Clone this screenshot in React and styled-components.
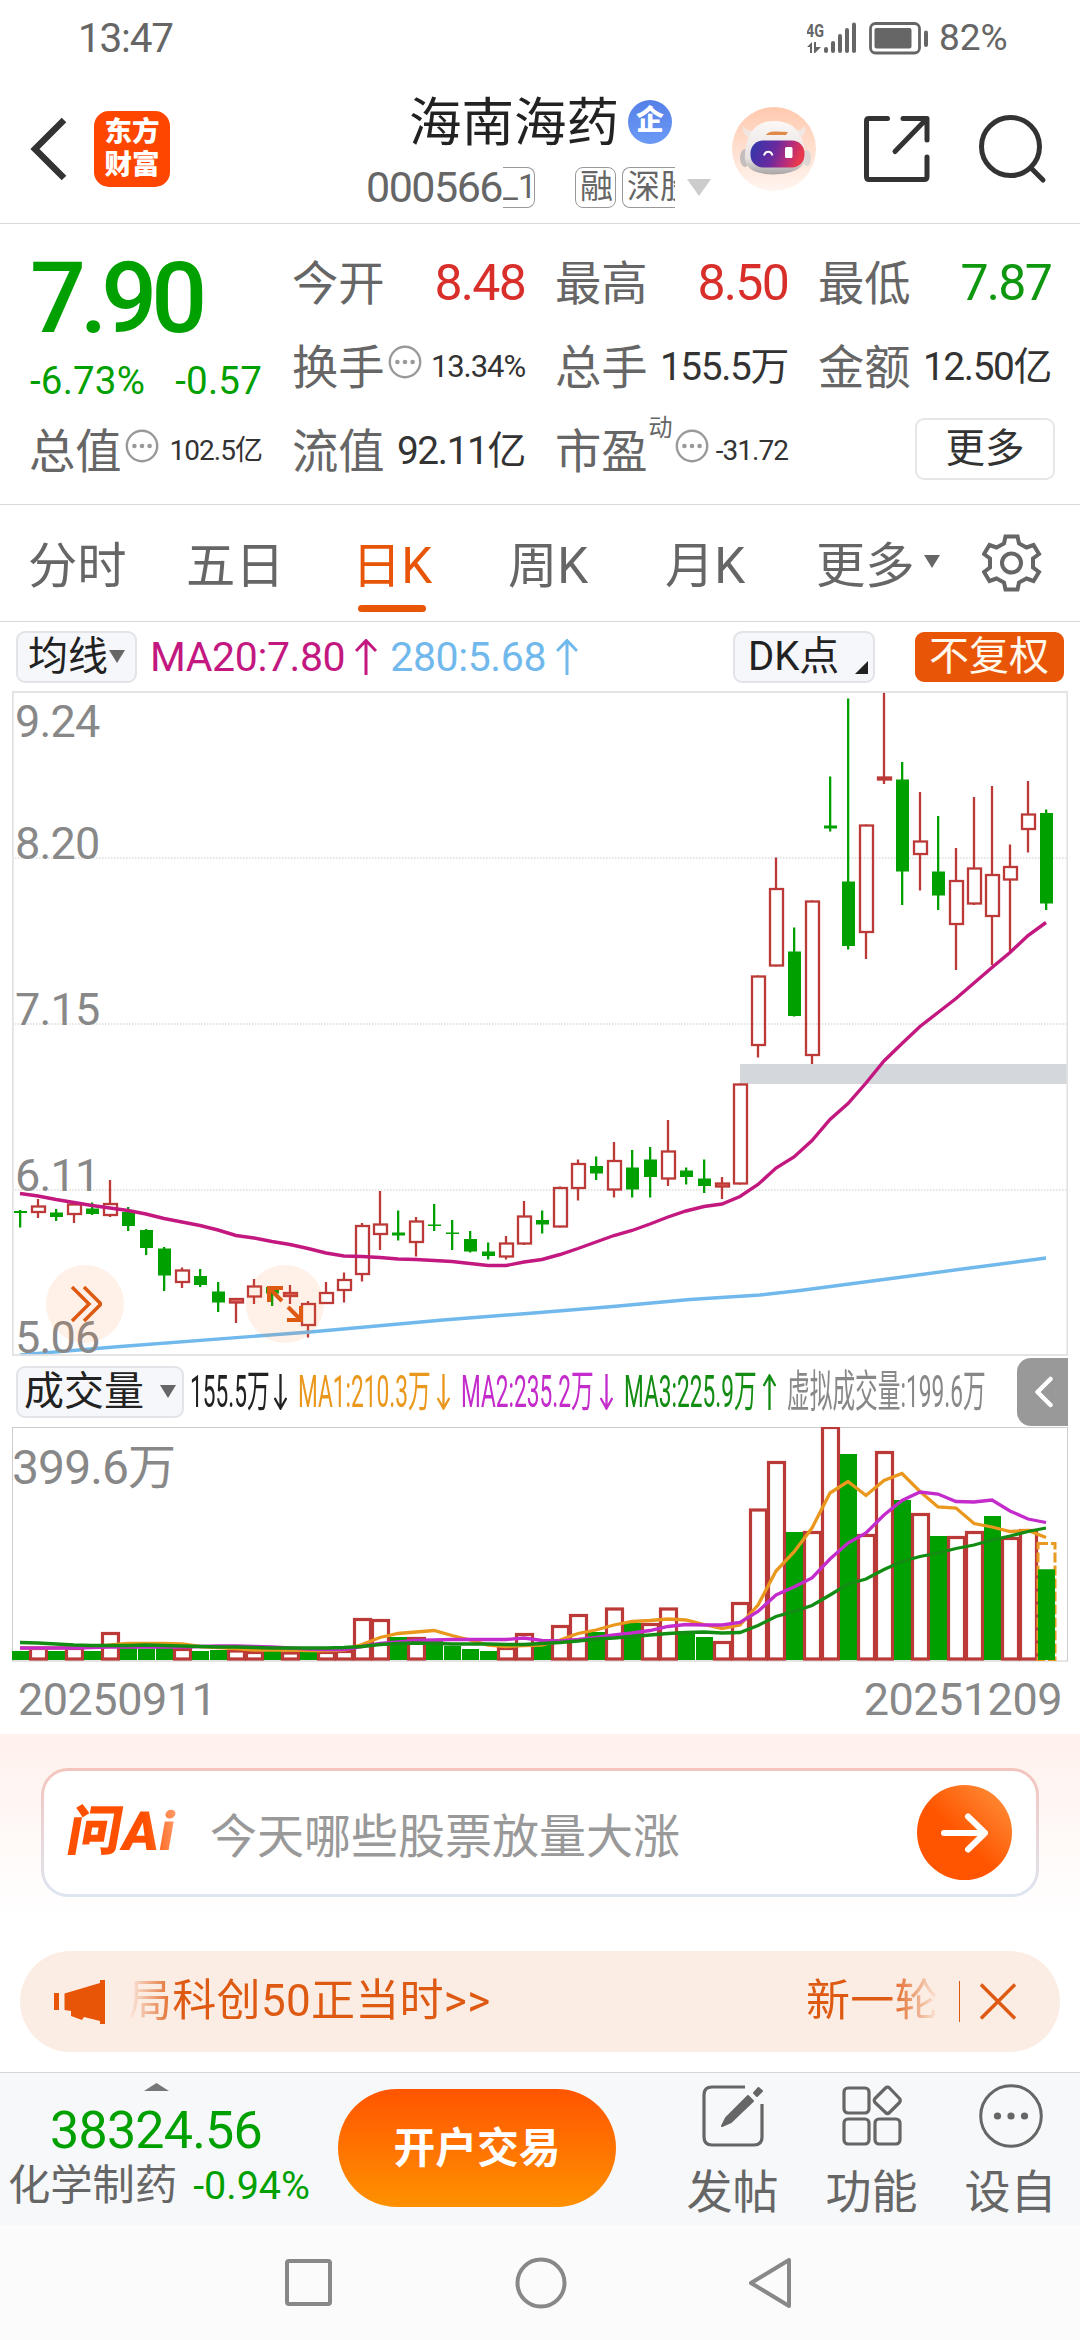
import React from 'react'
import styled, { createGlobalStyle } from 'styled-components'

const GlobalStyle = createGlobalStyle`
    * {
        box-sizing: border-box;
    }
    body {
        margin: 0;
        background: #fff;
        color: #333;
        font-family: Roboto, 'Noto Sans CJK SC', sans-serif;
    }
    svg {
        display: block;
        flex: none;
    }
`

const UP = '#bb3a38'
const DOWN = '#00a000'
const ORANGE = '#e85507'

const Screen = styled.div`
    width: 1080px;
    height: 2340px;
    display: flex;
    flex-direction: column;
    overflow: hidden;
    white-space: nowrap;
`

/* status bar */

const StatusBar = styled.div`
    height: 75px;
    padding: 0 72px 0 78px;
    display: flex;
    align-items: center;
    color: #666;
    line-height: 76px;
`

const Clock = styled.span`
    flex: 1;
    font-size: 40.5px;
    letter-spacing: -1.2px;
`

const Battery = styled.span`
    width: 69px;
    margin-left: 10px;
    font-size: 37px;
`

/* header */

const HeaderBar = styled.header`
    height: 149px;
    display: flex;
    align-items: center;
    padding: 0 33px 0 30px;
    border-bottom: 1px solid #d9d9d9;
`

const Logo = styled.div`
    width: 76px;
    height: 76px;
    margin-left: 26px;
    padding-top: 4px;
    border-radius: 15px;
    background: #ff4600;
    color: #fff;
    font-size: 27.5px;
    font-weight: 900;
    line-height: 33px;
    text-align: center;
`

const Titles = styled.div`
    flex: 1;
    height: 148px;
    padding: 10px 0 0 196px;
`

const NameLine = styled.div`
    display: flex;
    align-items: center;
    height: 66px;
    padding-left: 43px;
    font-size: 52.5px;
    color: #222;
`

const Badge = styled.span`
    width: 44px;
    height: 44px;
    margin: 8px 0 0 9px;
    border-radius: 50%;
    background: linear-gradient(#5580e8, #6b9af5);
    color: #fff;
    font-size: 28px;
    font-weight: 900;
    line-height: 42px;
    text-align: center;
`

const CodeLine = styled.div`
    display: flex;
    align-items: center;
    height: 42px;
    margin-top: 15px;
    color: #666;
`

const Code = styled.span`
    width: 137px;
    font-size: 43px;
    letter-spacing: -1.5px;
`

const Tag = styled.span`
    width: ${({ $width }) => $width}px;
    height: 41px;
    margin-right: ${({ $gap }) => $gap}px;
    border: 1px solid #999;
    border-left-width: ${({ $cut }) => ($cut === 'left' ? 0 : 1)}px;
    border-right-width: ${({ $cut }) => ($cut === 'right' ? 0 : 1)}px;
    border-radius: ${({ $cut }) =>
        $cut === 'left' ? '0 8px 8px 0' : $cut === 'right' ? '8px 0 0 8px' : '8px'};
    padding-left: ${({ $cut }) => ($cut === 'left' ? 0 : 4)}px;
    overflow: hidden;
    font-size: 33px;
    line-height: 38px;
`

const Triangle = styled.i`
    display: inline-block;
    flex: none;
    border-style: solid;
    border-color: transparent;
    border-top-color: ${({ $color }) => $color || '#666'};
    border-width: ${({ $h }) => $h || 13}px ${({ $w }) => $w || 8.5}px 0;
`

const HeaderIcons = styled.div`
    display: flex;
    align-items: center;
`

const ShareIcon = styled.svg`
    margin: 0 49px 0 47px;
`

/* quote panel */

const Quote = styled.section`
    height: 281px;
    padding: 15px 30px 0;
    display: grid;
    grid-template-columns: repeat(4, 232px);
    grid-template-rows: repeat(3, 84px);
    column-gap: 31px;
    border-bottom: 1px solid #d9d9d9;
`

const PriceCell = styled.div`
    grid-row: span 2;
    color: ${DOWN};
`

const Price = styled.div`
    height: 115px;
    line-height: 119px;
    font-size: 98.5px;
    font-weight: 500;
    letter-spacing: -6px;
`

const Change = styled.div`
    display: flex;
    justify-content: space-between;
    line-height: 53px;
    font-size: 38.5px;
    letter-spacing: 0.2px;
`

const Cell = styled.div`
    display: flex;
    align-items: center;
    height: 84px;
    line-height: 84px;
`

const Label = styled.span`
    margin-left: -1px;
    padding-top: 5px;
    font-size: 46.3px;
    color: #666;
`

const Value = styled.span`
    margin-left: auto;
    padding-top: 3px;
    font-size: ${({ $size }) => $size}px;
    letter-spacing: -0.035em;
    color: ${({ $color }) => $color || '#333'};
`

const DotsSvg = styled.svg`
    margin: 0 0 6px 3px;
`

const Sup = styled.sup`
    align-self: flex-start;
    margin: 0 -1px 0 1px;
    line-height: 42px;
    font-size: 24px;
    color: #666;
`

const MoreCell = styled(Cell)`
    justify-content: flex-end;
    margin-right: -4px;
`

const MoreButton = styled.button`
    width: 140px;
    height: 62px;
    padding: 0;
    border: 2px solid #e6e6e6;
    border-radius: 9px;
    background: #fff;
    color: #333;
    font: 39.5px/56px Roboto, 'Noto Sans CJK SC', sans-serif;
`

/* period tabs */

const Tabs = styled.nav`
    height: 117px;
    padding-left: 28px;
    display: grid;
    grid-template-columns: 158px 166px 156px 157px 151px 166px 60px;
    align-items: center;
    border-bottom: 1px solid #d9d9d9;
`

const Tab = styled.a`
    display: flex;
    align-items: center;
    gap: 9px;
    height: 116px;
    padding-bottom: 3px;
    font-size: 49.3px;
    color: ${({ $active }) => ($active ? ORANGE : '#666')};
    position: relative;

    &::after {
        content: '';
        display: ${({ $active }) => ($active ? 'block' : 'none')};
        position: absolute;
        left: 6px;
        bottom: 9px;
        width: 68px;
        height: 7px;
        border-radius: 4px;
        background: ${ORANGE};
    }
`

/* indicator rows */

const MaRow = styled.div`
    height: 69px;
    padding: 0 16px;
    display: flex;
    align-items: center;
    line-height: 68px;
`

const Chip = styled.span`
    width: ${({ $width }) => $width}px;
    height: ${({ $height }) => $height || 52}px;
    margin-left: ${({ $left }) => $left || 0}px;
    padding: 0 ${({ $pad }) => $pad || 10}px;
    display: flex;
    align-items: center;
    justify-content: space-between;
    border: 2px solid ${({ $solid }) => ($solid ? ORANGE : '#e2e4e8')};
    border-radius: 9px;
    background: ${({ $solid }) => ($solid ? ORANGE : '#f6f7fa')};
    color: ${({ $solid }) => ($solid ? '#fff8ec' : '#222')};
    font-size: 40px;
    line-height: 46px;
`

const MaText = styled.span`
    display: flex;
    align-items: center;
    gap: 10px;
    margin-left: ${({ $left }) => $left}px;
    font-size: 41px;
    letter-spacing: -0.4px;
    color: ${({ $color }) => $color};
`

const Corner = styled.i`
    align-self: flex-end;
    margin: 0 -8px 7px 0;
    border-left: 13px solid transparent;
    border-bottom: 13px solid #222;
`

const Spacer = styled.span`
    flex: 1;
`

const ChartBox = styled.div`
    position: relative;
    margin: 0 12px;
    height: ${({ $height }) => $height}px;
`

const RoundButton = styled.button`
    position: absolute;
    left: ${({ $left }) => $left}px;
    bottom: 13px;
    width: 78px;
    height: 78px;
    padding: 0;
    display: flex;
    align-items: center;
    justify-content: center;
    border: 0;
    border-radius: 50%;
    background: rgba(255, 120, 50, 0.11);
`

const VolRow = styled.div`
    height: 71px;
    padding: 0 12px 0 16px;
    display: flex;
    align-items: center;
    line-height: 68px;
`

const VolValues = styled.div`
    flex: 1;
    display: flex;
    padding-left: 6px;
`

const Narrow = styled.span`
    display: flex;
    align-items: center;
    width: ${({ $width }) => $width}px;
    color: ${({ $color }) => $color};

    span {
        flex: none;
        width: ${({ $text }) => $text}px;
        font-size: 44.5px;
        transform: scaleX(0.51);
        transform-origin: left;
    }
`

const Collapse = styled.button`
    width: 51px;
    height: 68px;
    padding: 0 0 0 17px;
    border: 0;
    border-radius: 14px 0 0 14px;
    background: #999;
`

const Dates = styled.div`
    height: 72px;
    padding: 0 18px 0 18px;
    display: flex;
    justify-content: space-between;
    line-height: 76px;
    font-size: 45px;
    letter-spacing: -0.5px;
    color: #888;
`

/* ask bar and notice */

const Ask = styled.section`
    height: 217px;
    padding: 34px 41px 0;
    background: linear-gradient(#fff1ec, #fff 84%);
`

const AskField = styled.div`
    height: 129px;
    padding: 0 24px;
    display: flex;
    align-items: center;
    border: 3px solid transparent;
    border-radius: 27px;
    background: linear-gradient(#fff, #fff) padding-box, linear-gradient(#f4c4bd, #dde6f1) border-box;
`

const AskLogo = styled.span`
    width: 142px;
    height: 66px;
    line-height: 64px;
    font-size: 54px;
    font-weight: 900;
    letter-spacing: 0.5px;
    color: transparent;
    background: linear-gradient(75deg, #ff5000 55%, #ffb48a 80%);
    background-clip: text;
    transform: skewX(-10deg);
`

const AskHint = styled.span`
    flex: 1;
    font-size: 47px;
    color: #999;
`

const AskGo = styled.button`
    width: 95px;
    height: 95px;
    padding: 0 0 0 24px;
    border: 0;
    border-radius: 50%;
    background: linear-gradient(45deg, #ff5500 45%, #ff9640);
`

const Notice = styled.div`
    height: 101px;
    margin: 0 20px 20px;
    padding: 0 43px 0 34px;
    display: flex;
    align-items: center;
    border-radius: 51px;
    background: #fcede4;
    color: #de5a12;
    font-size: 44px;
    line-height: 101px;
`

const Marquee = styled.div`
    width: 812px;
    margin-left: 23px;
    display: flex;
    justify-content: space-between;
    letter-spacing: 0.3px;
    mask-image: linear-gradient(90deg, transparent, #000 50px, #000 760px, transparent);

    span:last-child {
        width: 134px;
        overflow: hidden;
    }
`

const Divider = styled.i`
    width: 1px;
    height: 41px;
    margin: 0 20px 0 19px;
    background: #de5a12;
`

/* bottom bars */

const Footer = styled.footer`
    height: 153px;
    display: flex;
    border-top: 1px solid #d5d8da;
    background: #f7f8fa;
`

const Index = styled.div`
    flex: none;
    width: 312px;
    display: flex;
    flex-direction: column;
    align-items: center;
    padding-top: 10px;
    color: ${DOWN};
`

const IndexValue = styled.div`
    height: 78px;
    line-height: 80px;
    font-size: 52px;
    letter-spacing: -0.8px;
`

const IndexName = styled.div`
    align-self: stretch;
    display: flex;
    justify-content: space-between;
    padding: 0 2px 0 8px;
    line-height: 34px;
    font-size: 39.5px;

    span:first-child {
        font-size: 42.3px;
        color: #666;
    }
`

const Trade = styled.button`
    flex: none;
    width: 278px;
    height: 118px;
    margin: 16px 47px 0 26px;
    padding: 0;
    border: 0;
    border-radius: 59px;
    background: linear-gradient(#ff5500, #ff9100);
    color: #fff;
    font: 700 41.8px/120px Roboto, 'Noto Sans CJK SC', sans-serif;
`

const Tool = styled.div`
    flex: none;
    width: 139px;
    display: flex;
    flex-direction: column;
    align-items: center;
    padding-top: 11px;
    font-size: 46px;
    line-height: 88px;
    color: #666;
`

const NavBar = styled.div`
    flex: 1;
    display: flex;
    align-items: center;
    justify-content: center;
    gap: 182px;
    background: #fbfbfb;
`

const DotsIcon = () => (
    <DotsSvg width="34" height="34" viewBox="0 0 34 34">
        <circle cx="17" cy="17" r="15.2" fill="none" stroke="#999" strokeWidth="2.4" />
        <circle cx="9.4" cy="17" r="2.3" fill="#999" />
        <circle cx="17" cy="17" r="2.3" fill="#999" />
        <circle cx="24.6" cy="17" r="2.3" fill="#999" />
    </DotsSvg>
)

const Arrow = ({ down, narrow }) => (
    <svg width={narrow ? 13 : 22} height="36" viewBox="0 0 22 36" preserveAspectRatio="none" fill="none" stroke="currentColor">
        <path
            d={down ? 'M11 0V34M1 24L11 34.5L21 24' : 'M11 36V2M1 12L11 1.5L21 12'}
            vectorEffect="non-scaling-stroke"
            strokeWidth={narrow ? 2.3 : 3}
        />
    </svg>
)

const Robot = () => (
    <svg width="84" height="84" viewBox="0 0 84 84">
        <defs>
            <linearGradient id="halo" x1="0" y1="0" x2="0" y2="1">
                <stop offset="0" stopColor="#ffc9ae" />
                <stop offset="1" stopColor="#fff5f0" />
            </linearGradient>
            <linearGradient id="shell" x1="0" y1="0" x2="0" y2="1">
                <stop offset="0" stopColor="#fbf8f6" />
                <stop offset="0.7" stopColor="#e6e2e2" />
                <stop offset="1" stopColor="#aaa5a5" />
            </linearGradient>
            <linearGradient id="visor" x1="0" y1="0" x2="1" y2="0.2">
                <stop offset="0" stopColor="#2c38ac" />
                <stop offset="0.5" stopColor="#6a2a9e" />
                <stop offset="0.75" stopColor="#b02c80" />
                <stop offset="1" stopColor="#e8384e" />
            </linearGradient>
        </defs>
        <circle cx="42" cy="42" r="42" fill="url(#halo)" />
        <path d="M11 19Q10 29 20 32L24 24Q14 25 11 19ZM73 19Q75 28 66 32L62 23Q70 24 73 19Z" fill="#f1e6e1" />
        <ellipse cx="13" cy="51" rx="5" ry="9" fill="#c3bdbd" />
        <ellipse cx="75" cy="51" rx="4" ry="8" fill="#dcd6d5" />
        <path d="M42 14C58 14 68 22 71 36C75 50 74 57 66 62C55 69 30 69 20 63C11 57 12 48 15 36C18 22 27 14 42 14Z" fill="url(#shell)" />
        <path d="M34 28Q36 24 44 24.5L56 25L54 28Z" fill="#e08a4a" />
        <rect x="18.5" y="33.5" width="54" height="27" rx="12.5" fill="url(#visor)" />
        <path d="M32 48.5C33.5 43.5 39 43.5 40.5 48.5" fill="none" stroke="#fff" strokeWidth="2" />
        <rect x="53" y="40" width="7.5" height="11" rx="1.5" fill="#fff" />
    </svg>
)

const Header = () => (
    <HeaderBar>
        <svg width="38" height="66" viewBox="0 0 38 66" fill="none" stroke="#333" strokeWidth="6.5">
            <path d="M34 4L5 33L34 62" />
        </svg>
        <Logo>
            东方
            <br />
            财富
        </Logo>
        <Titles>
            <NameLine>
                海南海药<Badge>企</Badge>
            </NameLine>
            <CodeLine>
                <Code>000566</Code>
                <Tag $width={32} $gap={40} $cut="left">_1</Tag>
                <Tag $width={41} $gap={6}>融</Tag>
                <Tag $width={53} $gap={12} $cut="right">深股</Tag>
                <Triangle $color="#ccc" $w={12} $h={17} />
            </CodeLine>
        </Titles>
        <HeaderIcons>
            <Robot />
            <ShareIcon width="67" height="68" viewBox="0 0 67 68" fill="none" stroke="#333" strokeWidth="5" strokeLinecap="round" strokeLinejoin="round">
                <path d="M24.5 3.5H6Q3.5 3.5 3.5 6V61.5Q3.5 64.5 6 64.5H61Q64 64.5 64 61.5V42M40 3.5H64V25M62 5.5L32 36.5" />
            </ShareIcon>
            <svg width="68" height="70" viewBox="0 0 68 70" fill="none" stroke="#333" strokeWidth="5" strokeLinecap="round">
                <circle cx="31.5" cy="32.5" r="29" />
                <path d="M52 54L64 66" />
            </svg>
        </HeaderIcons>
    </HeaderBar>
)

const QuotePanel = () => (
    <Quote>
        <PriceCell>
            <Price>7.90</Price>
            <Change>
                <span>-6.73%</span>
                <span>-0.57</span>
            </Change>
        </PriceCell>
        <Cell>
            <Label>今开</Label>
            <Value $size={50} $color="#d92f2b">8.48</Value>
        </Cell>
        <Cell>
            <Label>最高</Label>
            <Value $size={50} $color="#d92f2b">8.50</Value>
        </Cell>
        <Cell>
            <Label>最低</Label>
            <Value $size={50} $color="#0f980f">7.87</Value>
        </Cell>
        <Cell>
            <Label>换手</Label>
            <DotsIcon />
            <Value $size={31}>13.34%</Value>
        </Cell>
        <Cell>
            <Label>总手</Label>
            <Value $size={38.8}>155.5万</Value>
        </Cell>
        <Cell>
            <Label>金额</Label>
            <Value $size={38.8}>12.50亿</Value>
        </Cell>
        <Cell>
            <Label>总值</Label>
            <DotsIcon />
            <Value $size={28}>102.5亿</Value>
        </Cell>
        <Cell>
            <Label>流值</Label>
            <Value $size={38.8}>92.11亿</Value>
        </Cell>
        <Cell>
            <Label>市盈</Label>
            <Sup>动</Sup>
            <DotsIcon />
            <Value $size={28}>-31.72</Value>
        </Cell>
        <MoreCell>
            <MoreButton>更多</MoreButton>
        </MoreCell>
    </Quote>
)

const PeriodTabs = () => (
    <Tabs>
        <Tab>分时</Tab>
        <Tab>五日</Tab>
        <Tab $active>日K</Tab>
        <Tab>周K</Tab>
        <Tab>月K</Tab>
        <Tab>
            更多
            <Triangle />
        </Tab>
        <svg width="60" height="58" viewBox="-1 0 60 58" fill="none" stroke="#666" strokeWidth="4">
            <path d="M22.5 2.5H34.5L36 9.5L43.5 13.5L50.5 11L56 20L50 24.5V33.5L56 38L50.5 47L43.5 44.5L36 48.5L34.5 55.5H22.5L21 48.5L13.5 44.5L6.5 47L1 38L7 33.5V24.5L1 20L6.5 11L13.5 13.5L21 9.5Z" />
            <circle cx="28.5" cy="29" r="9.5" />
        </svg>
    </Tabs>
)

// [wick top, body top, body bottom, wick bottom, rising]
const CANDLES = [
    [1210, 1211, 1213, 1227.5, 0], [1199, 1205.5, 1213, 1218, 1], [1209, 1212.5, 1217, 1221, 0],
    [1203.5, 1203.5, 1215, 1223, 1], [1202.5, 1208.5, 1214, 1215, 0], [1180, 1203, 1216, 1217, 1],
    [1207, 1212, 1226, 1231, 0], [1229, 1230, 1248, 1255, 0], [1247, 1248.5, 1275.5, 1291, 0],
    [1267.5, 1269.5, 1283, 1288, 1], [1269, 1276, 1285, 1287, 0], [1282, 1291.5, 1302.5, 1312, 0],
    [1298, 1298, 1303.5, 1323, 1], [1279, 1285.5, 1297.5, 1304, 1], [1287, 1287, 1293.5, 1306, 0],
    [1285, 1292, 1297, 1304, 1], [1301, 1303, 1326, 1337.5, 1], [1282, 1292, 1304, 1304, 1],
    [1272.5, 1279, 1291, 1302.5, 1], [1223, 1225, 1275, 1281.5, 1], [1191, 1223.5, 1235, 1250, 1],
    [1210.5, 1232.5, 1235.5, 1240.5, 0], [1217, 1220.5, 1243, 1256.5, 1], [1204, 1224.5, 1226, 1231, 0],
    [1220, 1232.5, 1234, 1250, 0], [1231, 1239, 1251.5, 1252.5, 0], [1242.5, 1251.5, 1256, 1259.5, 0],
    [1236, 1242.5, 1257.5, 1259.5, 1], [1201, 1215.5, 1244.5, 1245, 1], [1210.5, 1220, 1224.5, 1233.5, 0],
    [1186.5, 1187, 1227.5, 1227.5, 1], [1159.5, 1163, 1189, 1200.5, 1], [1156.5, 1166, 1173.5, 1180, 0],
    [1142, 1160, 1190.5, 1197.5, 1], [1150, 1167.5, 1189.5, 1197.5, 0], [1147, 1159.5, 1177, 1197.5, 0],
    [1120, 1150.5, 1179.5, 1186, 1], [1167.5, 1170.5, 1177, 1184.5, 0], [1159.5, 1178.5, 1186, 1193, 0],
    [1177, 1182.5, 1187.5, 1199, 1], [1083.5, 1083.5, 1184.5, 1184.5, 1], [975.5, 975.5, 1046, 1057.5, 1],
    [857.5, 888, 966.5, 966.5, 1], [927.5, 951.5, 1016, 1016.5, 0], [900.5, 900.5, 1056, 1064, 1],
    [776.5, 825.5, 828.5, 831.5, 0], [698.5, 881.5, 946, 949.5, 0], [824.5, 824.5, 933, 959, 1],
    [692, 776.5, 780.5, 784, 1], [762, 779.5, 871.5, 905, 0], [792, 840.5, 855, 890.5, 1],
    [816, 871.5, 895.5, 910, 0], [848, 880, 925, 970, 1], [797, 867.5, 904.5, 905, 1],
    [786, 874, 917, 965, 1], [844.5, 866, 880.5, 951.5, 1], [781, 813.5, 830, 852.5, 1],
    [809.5, 813, 903.5, 910, 0],
]

const MA20 = [
    1193.5, 1196, 1199.5, 1202.5, 1205.5, 1208, 1210.5, 1214, 1218.5, 1222, 1225.5, 1230, 1235.5, 1238,
    1241.5, 1244.5, 1248.5, 1253, 1256, 1256.5, 1257.5, 1259, 1259.5, 1260.5, 1261.5, 1263.5, 1265.5,
    1265.5, 1262, 1259.5, 1254.5, 1248.5, 1242, 1235.5, 1230.5, 1224, 1217, 1211, 1206.5, 1204, 1196.5,
    1184.5, 1168, 1157, 1140.5, 1119.5, 1103.5, 1083, 1061, 1043.5, 1026.5, 1012.5, 998.5, 983, 967.5,
    952.5, 935.5, 922.5,
]

// bar tops, positive when drawn hollow (rising), negative when filled
const VOLUMES = [
    -1651, 1647, -1651, 1647, -1651, 1632, -1647, -1648.5, -1648, 1648, -1651, -1650, 1649.5, 1651,
    -1651, 1651.5, -1652, 1651, 1650, 1618, 1619, -1637, 1637, -1641, -1646, -1649, -1651, 1647, 1633,
    -1645, 1625, 1614, -1632, 1607.5, -1623, 1623, 1607.5, -1631, -1637, 1641, 1602, 1508.5, 1461,
    -1532, 1531, 1426, -1454, 1534, 1451, -1500, 1513, -1536, 1536, 1531, -1516, 1537, 1529, -1569.5,
]

const VOL_MA1 = [
    1648, 1648, 1648, 1647.5, 1647, 1645, 1643.5, 1643.5, 1643.5, 1644, 1646.5, 1647.5, 1648.5, 1650,
    1650, 1650, 1650.5, 1650.5, 1650, 1644.5, 1637.5, 1633.5, 1632, 1630.5, 1635.5, 1640, 1645, 1646.5,
    1645.5, 1645, 1640, 1633.5, 1630, 1625, 1621.5, 1620.5, 1619, 1620, 1624.5, 1628.5, 1625, 1605,
    1571, 1552, 1528, 1493, 1481.5, 1495.5, 1480.5, 1473.5, 1491.5, 1507, 1508, 1523.5, 1527, 1531.5,
    1530.5, 1537.5,
]

const VOL_MA2 = [
    1648, 1648, 1648, 1648, 1647.5, 1647, 1647, 1647, 1647, 1647, 1646.5, 1646, 1646, 1646.5, 1647,
    1648, 1649, 1649.5, 1649.5, 1646.5, 1643.5, 1642, 1640.5, 1640, 1639.5, 1639.5, 1639.5, 1639.5,
    1638, 1640.5, 1641, 1639.5, 1637.5, 1635, 1633, 1630.5, 1626.5, 1624.5, 1625, 1625, 1622.5, 1611.5,
    1595, 1587, 1578, 1559, 1543, 1533, 1515, 1500.5, 1492, 1494, 1501.5, 1502, 1500, 1511, 1519, 1522.5,
]

const VOL_MA3 = [
    1642.5, 1643, 1644, 1645, 1645.5, 1645.5, 1645.5, 1645, 1645.5, 1646, 1646.5, 1647, 1647, 1647.5,
    1648, 1648, 1648, 1648, 1647.5, 1646.5, 1644.5, 1643.5, 1643, 1643.5, 1644, 1644, 1644, 1644.5,
    1644.5, 1643.5, 1642.5, 1641, 1639, 1638, 1636.5, 1635, 1633.5, 1632.5, 1632, 1633, 1632.5, 1625.5,
    1616.5, 1611.5, 1605.5, 1595, 1584, 1579, 1569.5, 1561.5, 1556.5, 1553, 1548.5, 1545, 1540, 1536,
    1531.5, 1528,
]

const MA280 =
    '20,1355 114,1347 310,1332 443,1320 540,1312.5 613,1306.5 690,1299.5 760,1295 800,1290.5 895,1278 970,1268 1046,1258'

const GRID = [
    ['9.24', 737],
    ['8.20', 859],
    ['7.15', 1025],
    ['6.11', 1191],
    ['5.06', 1353],
]

const colX = i => 20 + i * 18
const toLine = ys => ys.map((y, i) => `${colX(i)},${y}`).join(' ')

const Candle = ({ x, data: [high, top, bottom, low, rising] }) => {
    if (!rising) {
        return (
            <g fill={DOWN}>
                <rect x={x - 1} y={high} width="2.3" height={low - high} />
                <rect x={x - 6} y={top} width="13" height={bottom - top} />
            </g>
        )
    }
    return (
        <g stroke={UP} strokeWidth="2.3" fill="none">
            <path d={`M${x} ${high}V${top + 1}M${x} ${bottom - 1}V${low}`} />
            <rect x={x - 6} y={top + 1} width="13" height={bottom - top - 2} fill={bottom - top < 7 ? '#ef6b68' : 'none'} />
        </g>
    )
}

const PriceChart = () => (
    <ChartBox $height={665}>
        <svg width="1056" height="665" viewBox="12 691 1056 665">
            <g stroke="#dcdcdc" strokeWidth="1.5" strokeDasharray="1.5 1.5">
                <path d="M12 858H1068M12 1024H1068M12 1190H1068" />
            </g>
            <rect x="740" y="1064" width="327" height="20" fill="#d4d7dc" />
            {CANDLES.map((c, i) => (
                <Candle key={i} x={colX(i)} data={c} />
            ))}
            <polyline points={MA280} fill="none" stroke="#71b9ec" strokeWidth="3.4" />
            <polyline points={toLine(MA20)} fill="none" stroke="#c2187f" strokeWidth="3.4" />
            <rect x="12.8" y="692" width="1054.5" height="663" fill="none" stroke="#e2e2e2" strokeWidth="1.8" />
            <g fill="#888" fontSize="45" letterSpacing="-0.8">
                {GRID.map(([label, y]) => (
                    <text key={label} x="15" y={y}>{label}</text>
                ))}
            </g>
        </svg>
        <RoundButton $left={34}>
            <svg width="34" height="38" viewBox="0 0 34 38" fill="none" stroke="#de5a12" strokeWidth="3.5">
                <path d="M4 2L21 19L4 36M16 2L33 19L16 36" />
            </svg>
        </RoundButton>
        <RoundButton $left={234}>
            <svg width="38" height="38" viewBox="0 0 38 38" fill="none" stroke="#de5a12" strokeWidth="4">
                <path d="M17 3H3V17M3 3L16 16M21 35H35V21M35 35L22 22" />
            </svg>
        </RoundButton>
    </ChartBox>
)

const VolumeChart = () => (
    <ChartBox $height={235}>
        <svg width="1056" height="235" viewBox="12 1427 1056 235">
            <rect x="12.5" y="1427.5" width="1055" height="233.5" fill="none" stroke="#ccc" />
            {VOLUMES.map((v, i) => {
                const top = Math.abs(v)
                return v < 0 ? (
                    <rect key={i} x={colX(i) - 8} y={top} width="17" height={1660 - top} fill={DOWN} />
                ) : (
                    <rect key={i} x={colX(i) - 7.5} y={top + 1.5} width="16" height={1657.5 - top} fill="#fff" stroke={UP} strokeWidth="3.2" />
                )
            })}
            <rect x="1038" y="1543.5" width="17" height="116" fill="none" stroke="#e99a20" strokeWidth="3" strokeDasharray="10 3" />
            <rect x="1038" y="1569.5" width="17" height="90.5" fill={DOWN} />
            <g fill="none" strokeWidth="3.3">
                <polyline points={toLine(VOL_MA1)} stroke="#ea981d" />
                <polyline points={toLine(VOL_MA2)} stroke="#c42bcb" />
                <polyline points={toLine(VOL_MA3)} stroke="#138c13" />
            </g>
            <text x="12" y="1484" fill="#888" fontSize="48" letterSpacing="-0.9">399.6万</text>
        </svg>
    </ChartBox>
)

const App = () => (
    <>
        <GlobalStyle />
        <Screen>
            <StatusBar>
                <Clock>13:47</Clock>
                <svg width="122" height="36" viewBox="808 18 122 36" fill="#666">
                    <text x="807" y="34.5" fontSize="19" fontWeight="700" textLength="18" lengthAdjust="spacingAndGlyphs">4G</text>
                    <path d="M808 45L813 40V51H811V45ZM815 40H817V45H822L816 51H815Z" />
                    <rect x="825" y="45" width="4" height="6" rx="2" />
                    <rect x="832" y="39" width="4" height="12" rx="2" />
                    <rect x="839" y="32" width="4" height="19" rx="2" />
                    <rect x="846" y="26" width="4" height="25" rx="2" />
                    <rect x="853" y="20.5" width="4" height="30.5" rx="2" />
                    <rect x="871.5" y="21.5" width="49" height="29.5" rx="5" fill="none" stroke="#666" strokeWidth="2.8" />
                    <rect x="875.5" y="26" width="37" height="20.5" rx="2" />
                    <rect x="925" y="28.5" width="4" height="16.5" rx="2" />
                </svg>
                <Battery>82%</Battery>
            </StatusBar>
            <Header />
            <QuotePanel />
            <PeriodTabs />
            <MaRow>
                <Chip $width={121}>
                    均线
                    <Triangle />
                </Chip>
                <MaText $left={13} $color="#c2187f">
                    MA20:7.80
                    <Arrow />
                </MaText>
                <MaText $left={13} $color="#71b9ec">
                    280:5.68
                    <Arrow />
                </MaText>
                <Spacer />
                <Chip $width={142} $pad={13}>
                    DK点
                    <Corner />
                </Chip>
                <Chip $width={149} $height={50} $left={40} $pad={12} $solid>
                    不复权
                </Chip>
            </MaRow>
            <PriceChart />
            <VolRow>
                <Chip $width={168} $height={52} $pad={6}>
                    成交量
                    <Triangle $w={8} />
                </Chip>
                <VolValues>
                    <Narrow $width={108} $text={84} $color="#222">
                        <span>155.5万</span>
                        <Arrow down narrow />
                    </Narrow>
                    <Narrow $width={163} $text={139} $color="#ea981d">
                        <span>MA1:210.3万</span>
                        <Arrow down narrow />
                    </Narrow>
                    <Narrow $width={163} $text={139} $color="#c42bcb">
                        <span>MA2:235.2万</span>
                        <Arrow down narrow />
                    </Narrow>
                    <Narrow $width={163} $text={139} $color="#138c13">
                        <span>MA3:225.9万</span>
                        <Arrow narrow />
                    </Narrow>
                    <Narrow $width={200} $text={200} $color="#888">
                        <span>虚拟成交量:199.6万</span>
                    </Narrow>
                </VolValues>
                <Collapse>
                    <svg width="19" height="32" viewBox="0 0 19 32" fill="none" stroke="#fff" strokeWidth="4.5" strokeLinecap="round" strokeLinejoin="round">
                        <path d="M16.500 3L3.500 16L16.500 29" />
                    </svg>
                </Collapse>
            </VolRow>
            <VolumeChart />
            <Dates>
                <span>20250911</span>
                <span>20251209</span>
            </Dates>
            <Ask>
                <AskField>
                    <AskLogo>问Ai</AskLogo>
                    <AskHint>今天哪些股票放量大涨</AskHint>
                    <AskGo>
                        <svg width="48" height="40" viewBox="0 0 48 40" fill="none" stroke="#fff" strokeWidth="6" strokeLinecap="round" strokeLinejoin="round">
                            <path d="M3 20H44M27 3.5L44 20L27 36.5" />
                        </svg>
                    </AskGo>
                </AskField>
            </Ask>
            <Notice>
                <svg width="51" height="44" viewBox="0 0 51 44" fill={ORANGE}>
                    <path d="M0 13H5V30H0ZM10.5 13.5L46 3V0H51V44H46V41L30 37L28 40L17 36V31L10.5 30Z" />
                </svg>
                <Marquee>
                    <span>局科创50正当时&gt;&gt;</span>
                    <span>新一轮科</span>
                </Marquee>
                <Divider />
                <svg width="36" height="37" viewBox="0 0 36 37" stroke="#de5a12" strokeWidth="3.5">
                    <path d="M1 1.5L35 35.5M35 1.5L1 35.5" />
                </svg>
            </Notice>
            <Footer>
                <Index>
                    <svg width="25" height="8" viewBox="0 0 25 8" fill="#777">
                        <path d="M0 8L12.5 0L25 8Z" />
                    </svg>
                    <IndexValue>38324.56</IndexValue>
                    <IndexName>
                        <span>化学制药</span>
                        <span>-0.94%</span>
                    </IndexName>
                </Index>
                <Trade>开户交易</Trade>
                <Tool>
                    <svg width="62" height="64" viewBox="0 0 62 64" fill="none" stroke="#666" strokeWidth="3.2">
                        <path d="M43 3H10Q2 3 2 11V53Q2 61 10 61H52Q60 61 60 53V20" />
                        <path d="M20 42L24 34L46 12L51 17L29 38ZM52 9L56.5 4L60 7L55 12Z" fill="#666" strokeWidth="2" strokeLinejoin="round" />
                    </svg>
                    发帖
                </Tool>
                <Tool>
                    <svg width="60" height="64" viewBox="0 0 60 64" fill="none" stroke="#666" strokeWidth="3.2" strokeLinejoin="round">
                        <rect x="2" y="4" width="25" height="25" rx="4" />
                        <rect x="2" y="35" width="25" height="25" rx="4" />
                        <rect x="33" y="35" width="25" height="25" rx="4" />
                        <path d="M43.5 4Q45.5 2 47.5 4L57.5 14.5Q59 16.5 57.5 18.5L47.5 28.5Q45.5 30.5 43.5 28.5L33 18.5Q31.5 16.5 33 14.5Z" />
                    </svg>
                    功能
                </Tool>
                <Tool>
                    <svg width="64" height="64" viewBox="0 0 64 64">
                        <circle cx="32" cy="32" r="30.3" fill="none" stroke="#666" strokeWidth="3" />
                        <g fill="#666">
                            <circle cx="18.5" cy="32" r="3.6" />
                            <circle cx="32" cy="32" r="3.6" />
                            <circle cx="45.5" cy="32" r="3.6" />
                        </g>
                    </svg>
                    设自
                </Tool>
            </Footer>
            <NavBar>
                <svg width="48" height="50" viewBox="0 0 48 50" fill="none" stroke="#888" strokeWidth="4">
                    <rect x="2" y="3" width="43" height="43" rx="2" />
                </svg>
                <svg width="52" height="52" viewBox="0 0 52 52" fill="none" stroke="#888" strokeWidth="4">
                    <circle cx="26" cy="26" r="23.5" />
                </svg>
                <svg width="46" height="52" viewBox="0 0 46 52" fill="none" stroke="#888" strokeWidth="4" strokeLinejoin="round">
                    <path d="M40 3V49L2 26Z" />
                </svg>
            </NavBar>
        </Screen>
    </>
)

export default App
